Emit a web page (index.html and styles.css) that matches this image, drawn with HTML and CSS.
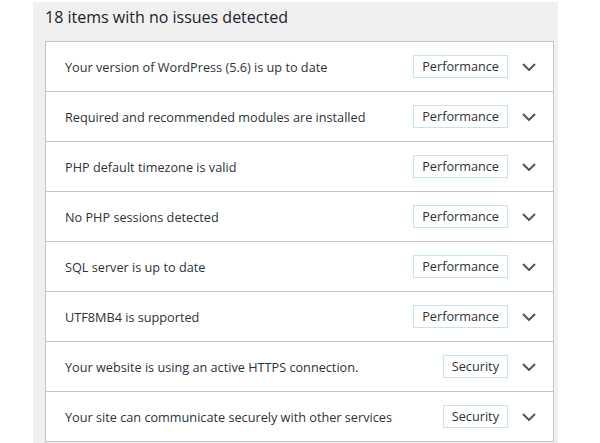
FILE: index.html
```html
<!DOCTYPE html>
<html>
<head>
<meta charset="utf-8">
<link rel="stylesheet" href="styles.css">
</head>
<body>
<div class="panel">
  <h3 class="heading">18 items with no issues detected</h3>
  <div class="list">
    <div class="row"><span class="label">Your version of WordPress (5.6) is up to date</span><span class="badge">Performance</span><svg class="chev" viewBox="0 0 14 8"><path d="M1 1 L7 7 L13 1"/></svg></div>
    <div class="row"><span class="label">Required and recommended modules are installed</span><span class="badge">Performance</span><svg class="chev" viewBox="0 0 14 8"><path d="M1 1 L7 7 L13 1"/></svg></div>
    <div class="row"><span class="label">PHP default timezone is valid</span><span class="badge">Performance</span><svg class="chev" viewBox="0 0 14 8"><path d="M1 1 L7 7 L13 1"/></svg></div>
    <div class="row"><span class="label">No PHP sessions detected</span><span class="badge">Performance</span><svg class="chev" viewBox="0 0 14 8"><path d="M1 1 L7 7 L13 1"/></svg></div>
    <div class="row"><span class="label">SQL server is up to date</span><span class="badge">Performance</span><svg class="chev" viewBox="0 0 14 8"><path d="M1 1 L7 7 L13 1"/></svg></div>
    <div class="row"><span class="label">UTF8MB4 is supported</span><span class="badge">Performance</span><svg class="chev" viewBox="0 0 14 8"><path d="M1 1 L7 7 L13 1"/></svg></div>
    <div class="row"><span class="label">Your website is using an active HTTPS connection.</span><span class="badge">Security</span><svg class="chev" viewBox="0 0 14 8"><path d="M1 1 L7 7 L13 1"/></svg></div>
    <div class="row"><span class="label">Your site can communicate securely with other services</span><span class="badge">Security</span><svg class="chev" viewBox="0 0 14 8"><path d="M1 1 L7 7 L13 1"/></svg></div>
  </div>
</div>
</body>
</html>
```
FILE: styles.css
```css
html, body {
  margin: 0;
  padding: 0;
  background: #ffffff;
  font-family: "Open Sans", "Noto Sans", sans-serif;
  color: #2c3338;
}
body {
  height: 443px;
  overflow: hidden;
}
.panel {
  margin: 2px 0 0 33px;
  width: 525px;
  height: 441px;
  box-sizing: border-box;
  padding: 0 4px 0 12px;
  background: #f0f0f1;
}
.heading {
  margin: 0;
  height: 39px;
  box-sizing: border-box;
  padding-top: 2px;
  font-size: 16px;
  font-weight: 400;
  line-height: 26px;
  color: #1d2327;
}
.list {
  background: #ffffff;
  border: 1px solid #c3c4c7;
  border-bottom: none;
}
.row {
  display: flex;
  align-items: center;
  height: 50px;
  box-sizing: border-box;
  border-bottom: 1px solid #c3c4c7;
  padding: 0 17px 0 19px;
  font-size: 12.7px;
}
.label {
  flex: 1;
  white-space: nowrap;
}
.badge {
  border: 1px solid #c5e3f0;
  height: 23px;
  box-sizing: border-box;
  line-height: 21px;
  padding: 0 8px;
  font-size: 12.7px;
  margin-right: 14px;
  margin-top: -1px;
}
.chev {
  width: 14px;
  height: 8px;
  fill: none;
  stroke: #50575e;
  stroke-width: 2;
}
```
